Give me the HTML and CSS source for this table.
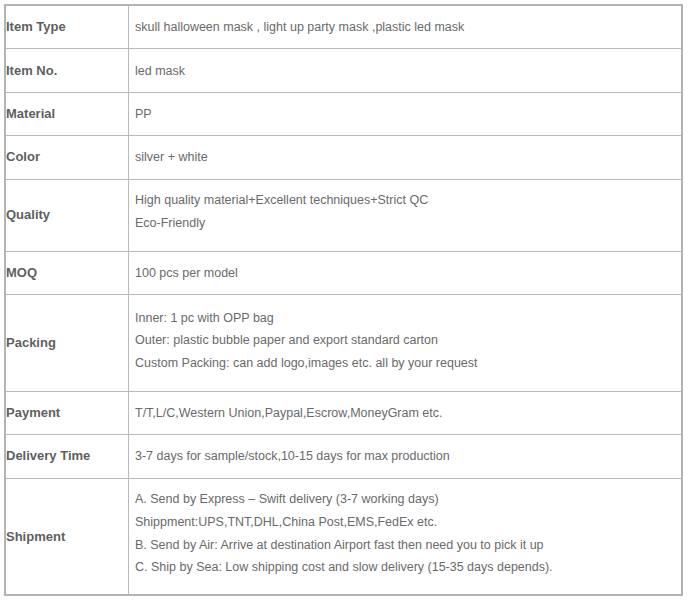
FILE: index.html
```html
<!DOCTYPE html>
<html>
<head>
<meta charset="utf-8">
<link rel="stylesheet" href="styles.css">
</head>
<body>
<div class="wrap">
<table class="spec">
  <tr><th>Item Type</th><td>skull halloween mask , light up party mask ,plastic led mask</td></tr>
  <tr><th>Item No.</th><td>led mask</td></tr>
  <tr><th>Material</th><td>PP</td></tr>
  <tr><th>Color</th><td>silver + white</td></tr>
  <tr><th>Quality</th><td class="multi"><p>High quality material+Excellent techniques+Strict QC</p><p>Eco-Friendly</p></td></tr>
  <tr><th>MOQ</th><td>100 pcs per model</td></tr>
  <tr><th>Packing</th><td class="multi packing"><p>Inner: 1 pc with OPP bag</p><p>Outer: plastic bubble paper and export standard carton</p><p>Custom Packing: can add logo,images etc. all by your request</p></td></tr>
  <tr><th>Payment</th><td>T/T,L/C,Western Union,Paypal,Escrow,MoneyGram etc.</td></tr>
  <tr><th>Delivery Time</th><td>3-7 days for sample/stock,10-15 days for max production</td></tr>
  <tr><th>Shipment</th><td class="multi shipment"><p>A. Send by Express – Swift delivery (3-7 working days)</p><p>Shippment:UPS,TNT,DHL,China Post,EMS,FedEx etc.</p><p>B. Send by Air: Arrive at destination Airport fast then need you to pick it up</p><p>C. Ship by Sea: Low shipping cost and slow delivery (15-35 days depends).</p></td></tr>
</table>
</div>
</body>
</html>
```
FILE: styles.css
```css
html, body {
  margin: 0;
  padding: 0;
  background: #fff;
}
.wrap {
  padding: 4px 4px 0 4px;
}
.spec {
  width: 679px;
  border-collapse: collapse;
  border: 2px solid #b4b4b4;
  font-family: "Liberation Sans", Arial, sans-serif;
  color: #6a6a6a;
}
.spec th, .spec td {
  border: 1px solid #b9b9b9;
  text-align: left;
  vertical-align: middle;
  line-height: 22px;
  padding: 10.2px 6px;
}
.spec th {
  width: 116px;
  font-size: 13px;
  font-weight: bold;
  color: #5f5f5f;
  padding-left: 0;
}
.spec td {
  font-size: 12.5px;
  padding-left: 6px;
}
.spec td.multi {
  padding-top: 9.5px;
  padding-bottom: 16.5px;
}
.spec td.packing {
  padding-top: 11.5px;
  padding-bottom: 16px;
}
.spec td.shipment {
  padding-bottom: 15.5px;
}
.spec td p {
  margin: 0;
  line-height: 22.7px;
}
```
